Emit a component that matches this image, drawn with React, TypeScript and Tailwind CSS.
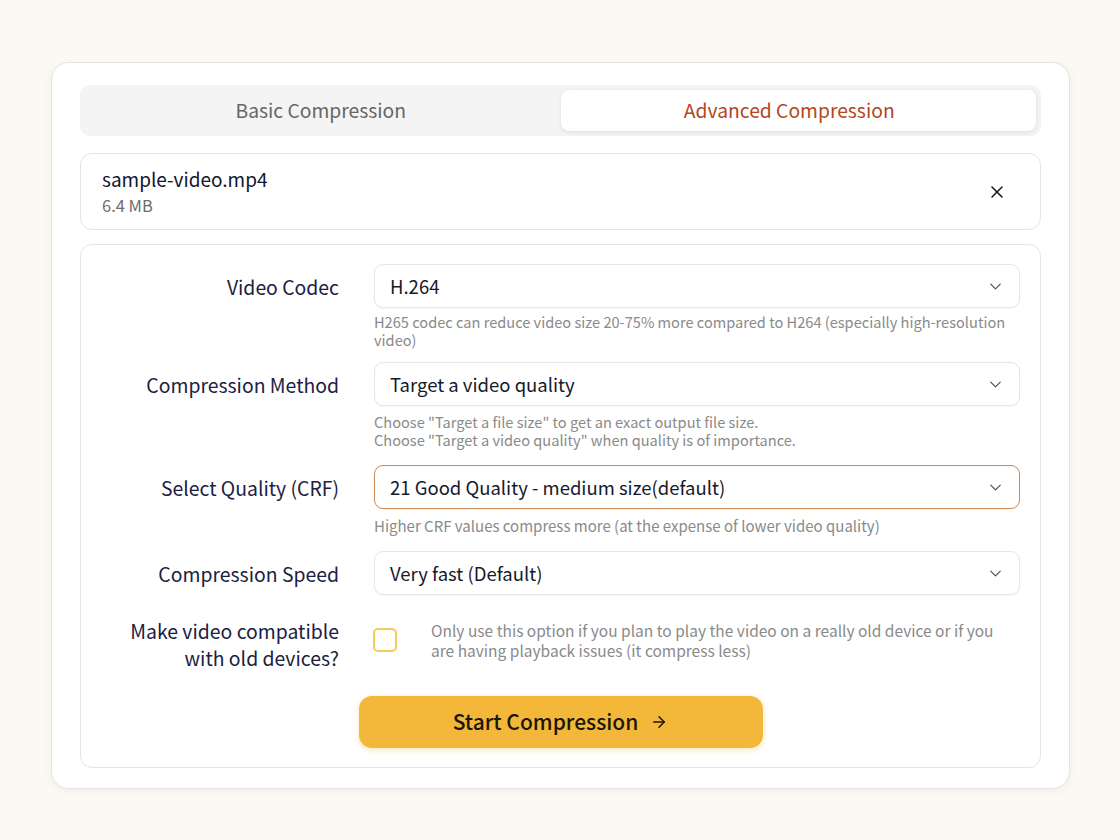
import React from "react";
import { ChevronDown, X, ArrowRight } from "lucide-react";

const font = { fontFamily: '"Noto Sans CJK SC", "Noto Sans", sans-serif' };

function Select({ value, active }: { value: string; active?: boolean }) {
  return (
    <div
      className={`flex h-[44px] items-center justify-between rounded-[9px] border bg-white pl-[15px] pr-[14px] shadow-[0_1px_2px_rgba(0,0,0,0.04)] ${
        active ? "border-[#c98a55]" : "border-[#e6e6e6]"
      }`}
    >
      <span className="text-[18.5px] leading-none text-[#16192b]">{value}</span>
      <ChevronDown size={19} strokeWidth={1.6} className="text-[#555]" />
    </div>
  );
}

function Label({ children }: { children: React.ReactNode }) {
  return (
    <div className="w-[258px] shrink-0 text-right text-[19.4px] leading-[27px] text-[#1b2142]">
      {children}
    </div>
  );
}

export default function App() {
  return (
    <div className="min-h-[840px] bg-[#fbf9f2] pl-[51px] pt-[62px]" style={font}>
      <div className="h-[727px] w-[1019px] rounded-[18px] border border-[#e4e4e4] bg-white px-[28px] pt-[22px] shadow-[0_2px_8px_rgba(0,0,0,0.05)]">
        {/* Tabs */}
        <div className="grid h-[51px] grid-cols-2 rounded-[10px] bg-[#f4f4f4] p-[5px]">
          <div className="flex items-center justify-center pr-[4px] text-[19.3px] text-[#666]">
            Basic Compression
          </div>
          <div className="flex items-center justify-center rounded-[8px] bg-white pr-[18px] text-[19.3px] text-[#b3461d] shadow-[0_1px_4px_rgba(0,0,0,0.1)]">
            Advanced Compression
          </div>
        </div>

        {/* File card */}
        <div className="mt-[17px] flex h-[77px] items-center justify-between rounded-[12px] border border-[#e5e5e5] pl-[21px] pr-[33px]">
          <div className="flex flex-col">
            <span className="text-[19px] leading-[27px] text-[#12162e]">sample-video.mp4</span>
            <span className="text-[16.5px] leading-[26px] text-[#6e6e6e]">6.4 MB</span>
          </div>
          <X size={20} strokeWidth={1.8} className="text-[#111]" />
        </div>

        {/* Form card */}
        <div className="mt-[14px] h-[524px] rounded-[12px] border border-[#e5e5e5] pr-[20px] pt-[19px]">
          {/* Row 1 */}
          <div className="flex">
            <div className="flex h-[44px] items-center">
              <Label>Video Codec</Label>
            </div>
            <div className="ml-[35px] flex-1">
              <Select value="H.264" />
              <p className="mt-[5px] pr-[10px] text-[14.6px] leading-[18px] text-[#8a8a8a]">
                H265 codec can reduce video size 20-75% more compared to H264 (especially high-resolution video)
              </p>
            </div>
          </div>

          {/* Row 2 */}
          <div className="mt-[13px] flex">
            <div className="flex h-[44px] items-center">
              <Label>Compression Method</Label>
            </div>
            <div className="ml-[35px] flex-1">
              <Select value="Target a video quality" />
              <div className="mt-[7px] text-[14.6px] leading-[18px] text-[#8a8a8a]">
                <p>Choose "Target a file size" to get an exact output file size.</p>
                <p>Choose "Target a video quality" when quality is of importance.</p>
              </div>
            </div>
          </div>

          {/* Row 3 */}
          <div className="mt-[16px] flex">
            <div className="flex h-[44px] items-center">
              <Label>Select Quality (CRF)</Label>
            </div>
            <div className="ml-[35px] flex-1">
              <Select value="21 Good Quality - medium size(default)" active />
              <p className="mt-[8px] text-[15px] leading-[18px] text-[#8a8a8a]">
                Higher CRF values compress more (at the expense of lower video quality)
              </p>
            </div>
          </div>

          {/* Row 4 */}
          <div className="mt-[16px] flex">
            <div className="flex h-[44px] items-center">
              <Label>Compression Speed</Label>
            </div>
            <div className="ml-[35px] flex-1">
              <Select value="Very fast (Default)" />
            </div>
          </div>

          {/* Row 5 */}
          <div className="mt-[22px] flex">
            <Label>
              Make video compatible
              <br />
              with old devices?
            </Label>
            <div className="ml-[34px] flex flex-1 items-start">
              <div className="mt-[11px] h-[24px] w-[24px] shrink-0 rounded-[5px] border-2 border-[#f3cd5c] bg-white" />
              <p className="ml-[34px] mt-[3px] pr-[20px] text-[15.5px] leading-[20px] text-[#8a8a8a]">
                Only use this option if you plan to play the video on a really old device or if you are having playback issues (it compress less)
              </p>
            </div>
          </div>

          {/* Button */}
          <div className="mt-[25px] flex justify-center">
            <button className="ml-[20px] flex h-[52px] w-[404px] items-center justify-center gap-[12px] rounded-[13px] bg-[#f3b73a] text-[21px] font-medium text-[#1c1608] shadow-[0_2px_6px_rgba(243,183,58,0.35)]">
              Start Compression
              <ArrowRight size={18} strokeWidth={2} />
            </button>
          </div>
        </div>
      </div>
    </div>
  );
}
